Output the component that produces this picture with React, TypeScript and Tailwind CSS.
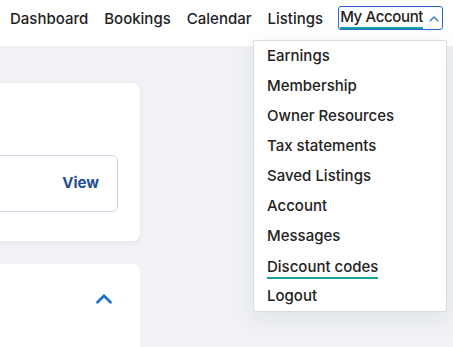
import React from 'react';

const menuItems = [
    'Earnings',
    'Membership',
    'Owner Resources',
    'Tax statements',
    'Saved Listings',
    'Account',
    'Messages',
    'Discount codes',
    'Logout',
];

const ChevronUp: React.FC<{ className?: string; width?: number }> = ({ className, width = 2 }) => (
    <svg viewBox="0 0 16 10" className={className} fill="none" stroke="currentColor" strokeWidth={width} strokeLinecap="round" strokeLinejoin="round">
        <path d="M2 8.5 8 2.5l6 6" />
    </svg>
);

const App: React.FC = () => {
    return (
        <div className="relative w-[453px] h-[347px] overflow-hidden bg-[#f0f2f5] font-['Inter',sans-serif] text-[#222]">
            {/* top nav */}
            <header className="flex h-[46px] items-start bg-white pl-[10px] pt-[6px]">
                <nav className="flex items-center gap-[16px] text-[15px] font-medium leading-[23px]">
                    <span>Dashboard</span>
                    <span>Bookings</span>
                    <span>Calendar</span>
                    <span>Listings</span>
                    <button className="-ml-[1px] flex h-[24px] w-[105px] items-center rounded-[3px] border-[1.5px] border-[#2b63d9] pl-[1px] pr-[3px]">
                        <span className="border-b-2 border-[#1aa39a] leading-[20px] tracking-[-0.35px]">My Account</span>
                        <ChevronUp width={2.2} className="ml-auto h-[7px] w-[10px] text-[#2b6fd0]" />
                    </button>
                </nav>
            </header>

            {/* page content */}
            <main className="flex flex-col gap-[23px] pt-[37px]">
                <section className="-ml-[20px] flex h-[158px] w-[160px] flex-col rounded-lg bg-white pt-[72px] shadow-[0_2px_6px_rgba(30,40,60,0.06)]">
                    <div className="flex h-[57px] w-[138px] items-center justify-end rounded-md border border-[#c8d6e3] pr-[18px]">
                        <span className="text-[15px] font-bold text-[#1f4f99]">View</span>
                    </div>
                </section>
                <section className="-ml-[20px] flex h-[120px] w-[160px] items-start justify-end rounded-lg bg-white pr-[27px] pt-[29px]">
                    <ChevronUp width={2.4} className="h-[11px] w-[18px] text-[#1a6fc6]" />
                </section>
            </main>

            {/* dropdown */}
            <div className="absolute left-[253px] top-[40px] flex w-[194px] flex-col rounded-b-[3px] border border-[#d8dde3] bg-white pl-[13px] shadow-[0_6px_24px_rgba(30,40,60,0.08)]">
                {menuItems.map((item) => (
                    <div key={item} className="flex h-[30px] items-center text-[15px] font-medium">
                        {item === 'Discount codes' ? (
                            <span className="border-b-2 border-[#1aa39a] leading-[21px] pt-[2px]">{item}</span>
                        ) : (
                            <span>{item}</span>
                        )}
                    </div>
                ))}
            </div>
        </div>
    );
};

export default App;
